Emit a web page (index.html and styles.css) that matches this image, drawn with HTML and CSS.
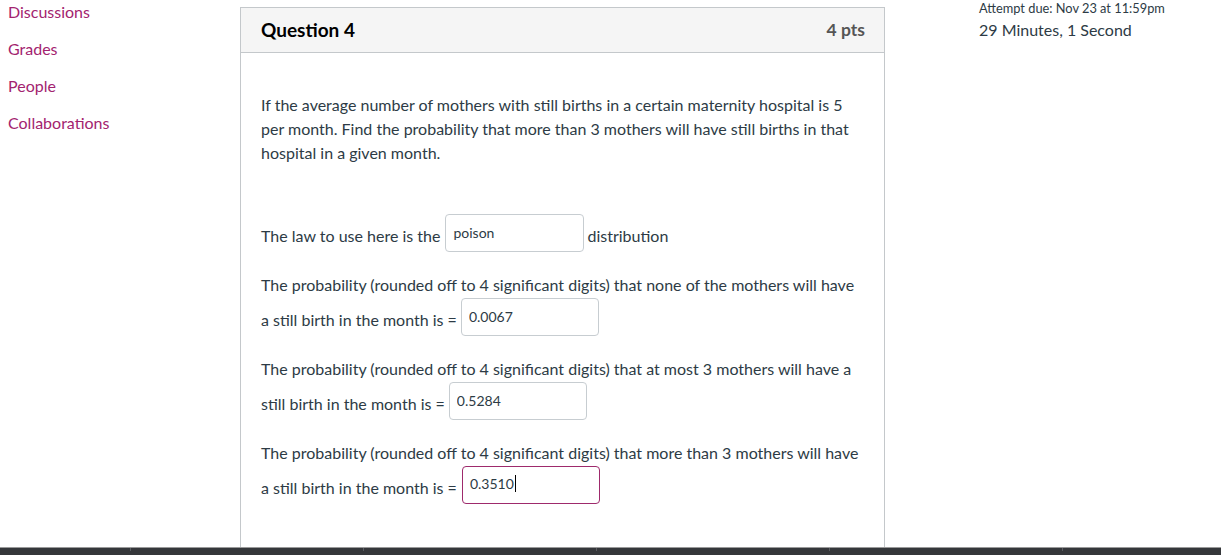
FILE: index.html
```html
<!DOCTYPE html>
<html lang="en">
<head>
<meta charset="utf-8">
<title>Question 4</title>
<link rel="stylesheet" href="styles.css">
</head>
<body>
<div class="page">
  <nav class="nav">
    <a class="nav-link" href="#">Discussions</a>
    <a class="nav-link" href="#">Grades</a>
    <a class="nav-link" href="#">People</a>
    <a class="nav-link" href="#">Collaborations</a>
  </nav>
  <main class="main">
    <section class="card">
      <header class="card-head">
        <span class="q-title">Question 4</span>
        <span class="q-pts">4 pts</span>
      </header>
      <div class="card-body">
        <p class="intro">If the average number of mothers with still births in a certain maternity hospital is 5 per month. Find the probability that more than 3 mothers will have still births in that hospital in a given month.</p>
        <div class="row law">
          <span class="lbl">The law to use here is the</span>
          <input class="ans w1" type="text" value="poison">
          <span class="lbl">distribution</span>
        </div>
        <div class="group">
          <p class="line">The probability (rounded off to 4 significant digits) that none of the mothers will have</p>
          <div class="row">
            <span class="lbl">a still birth in the month is =</span>
            <input class="ans" type="text" value="0.0067">
          </div>
        </div>
        <div class="group">
          <p class="line">The probability (rounded off to 4 significant digits) that at most 3 mothers will have a</p>
          <div class="row">
            <span class="lbl">still birth in the month is =</span>
            <input class="ans" type="text" value="0.5284">
          </div>
        </div>
        <div class="group">
          <p class="line">The probability (rounded off to 4 significant digits) that more than 3 mothers will have</p>
          <div class="row">
            <span class="lbl">a still birth in the month is =</span>
            <span class="ans focus">0.3510<span class="caret"></span></span>
          </div>
        </div>
      </div>
    </section>
  </main>
  <aside class="aside">
    <div class="due">Attempt due: Nov 23 at 11:59pm</div>
    <div class="timer">29 Minutes, 1 Second</div>
  </aside>
</div>
<div class="bottom-bar">
  <span class="tick"></span><span class="tick"></span><span class="tick"></span><span class="tick"></span><span class="tick"></span>
</div>
</body>
</html>
```

FILE: styles.css
```css
html, body {
  margin: 0;
  padding: 0;
  height: 100%;
  overflow: hidden;
}
body {
  font-family: Lato, "Open Sans", "Liberation Sans", sans-serif;
  color: #2d3b45;
  background: #fff;
}
.page {
  display: flex;
  align-items: flex-start;
}
.nav {
  width: 232px;
  padding-left: 8px;
  display: flex;
  flex-direction: column;
}
.nav-link {
  display: block;
  color: #a3236f;
  text-decoration: none;
  font-size: 16px;
  line-height: 24px;
  margin-bottom: 13px;
}
.main {
  width: 645px;
  padding-top: 7px;
}
.card {
  border: 1px solid #c4c8cb;
  min-height: 560px;
  box-sizing: border-box;
}
.card-head {
  background: #f5f5f5;
  height: 44px;
  border-bottom: 1px solid #c4c8cb;
  display: flex;
  align-items: center;
  justify-content: space-between;
  padding: 0 19px 0 20px;
}
.q-title {
  font-size: 19px;
  font-weight: 700;
  color: #000;
  margin-top: -2px;
}
.q-pts {
  font-size: 17.5px;
  font-weight: 700;
  color: #555;
  margin-top: -2px;
}
.card-body {
  padding: 40px 20px 0 20px;
  font-size: 16px;
  line-height: 24px;
}
.intro {
  margin: 0 0 49px 0;
}
.row {
  display: flex;
  align-items: center;
  height: 38px;
}
.lbl {
  padding-top: 5px;
  line-height: 24px;
}
.law {
  margin-bottom: 22px;
}
.group {
  margin-bottom: 22px;
}
.line {
  margin: -1px 0 1px 0;
}
.ans {
  box-sizing: border-box;
  width: 138px;
  height: 38px;
  margin: 0 4px 0 4px;
  padding: 0 7px 1px 7px;
  border: 1px solid #c7cdd1;
  border-radius: 4px;
  font-family: Lato, "Open Sans", "Liberation Sans", sans-serif;
  font-size: 14px;
  color: #2d3b45;
  background: #fff;
  outline: none;
}
.w1 {
  margin-left: 5px;
  margin-right: 3px;
  width: 139px;
}
.focus {
  display: inline-flex;
  align-items: center;
  border-color: #9e2a6c;
  margin-left: 5px;
  padding-bottom: 3px;
}
.caret {
  display: inline-block;
  width: 1px;
  height: 17px;
  background: #000;
  margin-left: 1px;
}
.aside {
  padding-left: 94px;
  padding-top: 0;
}
.due {
  font-size: 12.8px;
  line-height: 16px;
}
.timer {
  font-size: 16px;
  line-height: 28px;
}
.bottom-bar {
  position: fixed;
  left: 0;
  right: 0;
  bottom: 0;
  height: 7px;
  background: #35373a;
  border-top: 1px solid #9a9a9a;
  display: flex;
  padding-left: 130px;
  gap: 232px;
}
.tick {
  width: 1px;
  height: 3px;
  background: #5a5c60;
}
```
